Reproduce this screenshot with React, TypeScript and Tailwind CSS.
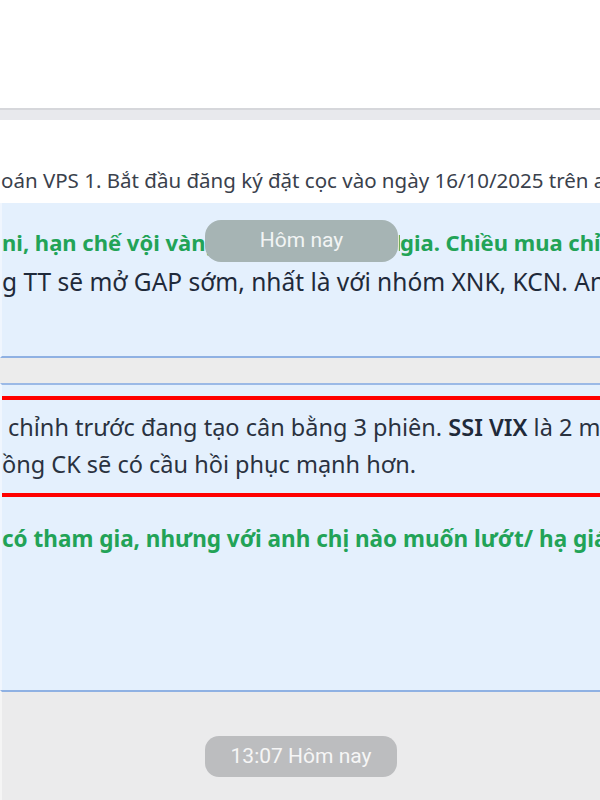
import React from "react";

const main = { fontFamily: '"Noto Sans", "Open Sans", sans-serif' };
const rob = { fontFamily: 'Roboto, "Liberation Sans", sans-serif' };

export default function App() {
  return (
    <div className="relative w-[600px] h-[800px] overflow-hidden bg-white" style={main}>
      <div className="h-[108px] bg-white" />
      <div className="h-[12px] border-t-2 border-[#d6d7db] bg-[#e8e9ed]" />
      <div className="h-[83px] flex items-end pb-[10px] bg-white">
        <div className="whitespace-nowrap text-[20.5px] leading-[26px] text-[#3a414c] pl-[1px]">
          oán VPS 1. Bắt đầu đăng ký đặt cọc vào ngày 16/10/2025 trên app
        </div>
      </div>
      <div className="h-[155px] bg-[#e4f0fd] border-b-2 border-[#8fb1e3] border-l-2 border-l-[#f0f6fe] pt-[19px]">
        <div className="flex whitespace-nowrap text-[22px] leading-[40px] font-bold text-[#22a357]">
          <div className="w-[398px] shrink-0 overflow-hidden">ni, hạn chế vội vàng mua đuổi, nên tham</div>
          <div>gia. Chiều mua chỉ</div>
        </div>
        <div className="whitespace-nowrap text-[24.5px] leading-[40px] text-[#1f2a3a]">
          g TT sẽ mở GAP sớm, nhất là với nhóm XNK, KCN. Anh
        </div>
      </div>
      <div className="h-[25px] bg-[#ececec]" />
      <div className="bg-[#e4f0fd] border-t-2 border-[#9bb9e6] border-l-2 border-l-[#f0f6fe] h-[307px]">
        <div className="h-[11px]" />
        <div className="border-y-4 border-[#ff0000] h-[101px] pt-[9px]">
          <div className="whitespace-nowrap text-[23.5px] leading-[37px] text-[#2a3240] pl-[6px]">
            chỉnh trước đang tạo cân bằng 3 phiên. <span className="font-semibold text-[#1f2a3a]">SSI VIX</span> là 2 mã
          </div>
          <div className="whitespace-nowrap text-[23.5px] leading-[37px] text-[#2a3240]">
            ồng CK sẽ có cầu hồi phục mạnh hơn.
          </div>
        </div>
        <div className="whitespace-nowrap text-[22.5px] leading-[40px] font-bold text-[#22a357] pt-[22px]">
          có tham gia, nhưng với anh chị nào muốn lướt/ hạ giá vốn
        </div>
      </div>
      <div className="border-t-2 border-[#8fb1e3] h-[110px] bg-[#ebebec] border-l-2 border-l-[#f5f5f5] flex justify-center pt-[44px]">
        <div
          className="w-[192px] h-[41px] rounded-[14px] bg-[#bcbdbf] text-[#f6f6f6] text-[21px] flex items-center justify-center"
          style={rob}
        >
          13:07 Hôm nay
        </div>
      </div>
      <div
        className="absolute left-[205px] top-[220px] w-[193px] h-[42px] rounded-[16px] bg-[#a6b4b4] text-[#f2f4f4] text-[21px] flex items-center justify-center"
        style={rob}
      >
        Hôm nay
      </div>
    </div>
  );
}
